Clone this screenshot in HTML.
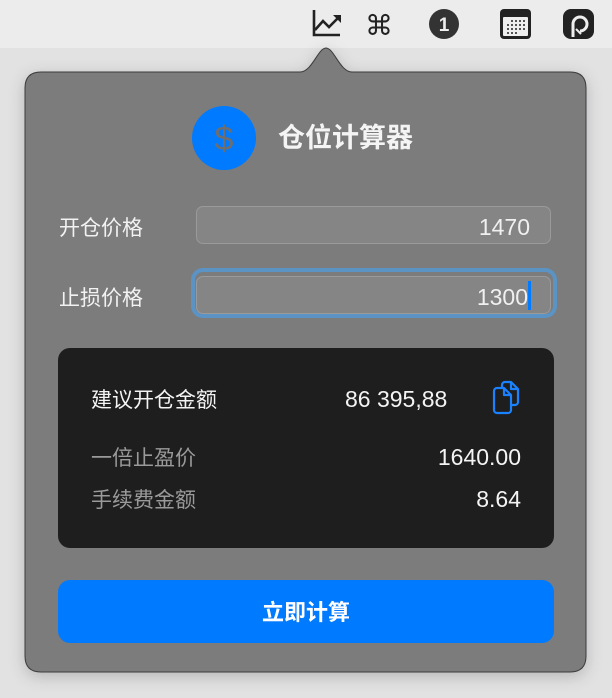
<!DOCTYPE html><html><head><meta charset="utf-8"><style>
body{margin:0;width:612px;height:698px;background:#e2e2e3;position:relative;overflow:hidden;font-family:"Liberation Sans","Noto Sans CJK SC",sans-serif}
.bar{position:absolute;left:0;top:0;width:612px;height:48px;background:#ececec}
.a{position:absolute;white-space:nowrap;line-height:1.2}
.lbl{color:#f2f2f2;font-size:21px}
.inp{position:absolute;left:196px;width:355px;height:38px;box-sizing:border-box;border:1px solid #9a9a9a;border-radius:7px;background:#858585;color:#f0f0f0;font-size:23px;text-align:right;padding-right:20px;line-height:41px}
</style></head><body>
<div class="bar"></div>
<svg class="a" style="left:0;top:0" width="612" height="698">
<defs><filter id="s" x="-10%" y="-10%" width="120%" height="120%"><feDropShadow dx="0" dy="4" stdDeviation="8" flood-color="#000" flood-opacity=".2"/></filter></defs>
<path d="M41 72 H300 C312 72 318 48 326 48 C334 48 340 72 352 72 H570 Q586 72 586 88 V656 Q586 672 570 672 H41 Q25 672 25 656 V88 Q25 72 41 72Z" fill="#7b7b7b" stroke="#3a3a3a" stroke-width="1" filter="url(#s)"/>
<path d="M314 10 V35 H340" fill="none" stroke="#222" stroke-width="2.6"/>
<path d="M315 30 L323 21 L329 27 L338 18" fill="none" stroke="#222" stroke-width="2.6"/>
<path d="M333 15 L341 15 L341 23Z" fill="#222"/>
<text x="379" y="35" font-size="28" text-anchor="middle" fill="#222" font-family="DejaVu Sans">⌘</text>
<circle cx="444" cy="24" r="15" fill="#333"/>
<text x="444" y="31" font-size="19" font-weight="bold" text-anchor="middle" fill="#eee">1</text>
<rect x="500" y="9" width="31" height="30" rx="4" fill="#222"/>
<rect x="503" y="17" width="25" height="19" rx="1" fill="#eee"/>
<g fill="#222"><circle cx="512" cy="21" r="1"/><circle cx="516" cy="21" r="1"/><circle cx="520" cy="21" r="1"/><circle cx="524" cy="21" r="1"/><circle cx="508" cy="25" r="1"/><circle cx="512" cy="25" r="1"/><circle cx="516" cy="25" r="1"/><circle cx="520" cy="25" r="1"/><circle cx="524" cy="25" r="1"/><circle cx="508" cy="29" r="1"/><circle cx="512" cy="29" r="1"/><circle cx="516" cy="29" r="1"/><circle cx="520" cy="29" r="1"/><circle cx="524" cy="29" r="1"/><circle cx="508" cy="33" r="1"/><circle cx="512" cy="33" r="1"/><circle cx="516" cy="33" r="1"/></g>
<rect x="563" y="9" width="31" height="30" rx="8" fill="#222"/>
<path d="M573 37 V24 A7 7 0 1 1 580 31" fill="none" stroke="#eee" stroke-width="3"/>
<path d="M576 29 L581 34" stroke="#eee" stroke-width="2"/>
<circle cx="224" cy="138" r="32" fill="#007aff"/>
<text x="224" y="150" font-size="34" text-anchor="middle" fill="#6e6e6e">$</text>
<rect x="193" y="270" width="362" height="46" rx="10" fill="none" stroke="#5a93c4" stroke-width="4"/>
<rect x="58" y="348" width="496" height="200" rx="12" fill="#1e1e1e"/>
<g fill="none" stroke="#1a82ff" stroke-width="2.2" stroke-linejoin="round">
<path d="M502 388 V385 a3 3 0 0 1 3 -3 h6 l7 7 v13 a3 3 0 0 1 -3 3 h-5"/>
<path d="M511 382 v7 h7"/>
<path d="M497 388 h7 l7 7 v15 a3 3 0 0 1 -3 3 h-11 a3 3 0 0 1 -3 -3 v-19 a3 3 0 0 1 3 -3z"/>
<path d="M504 388 v7 h7"/>
</g>
<rect x="58" y="580" width="496" height="63" rx="12" fill="#007aff"/>
</svg>
<div class="a" style="left:278px;top:122px;font-size:27px;font-weight:bold;color:#f4f4f4">仓位计算器</div>
<div class="a lbl" style="left:59px;top:216px">开仓价格</div>
<div class="a lbl" style="left:59px;top:286px">止损价格</div>
<div class="inp" style="top:206px">1470</div>
<div class="inp" style="top:276px;padding-right:22px">1300<span style="position:absolute;right:19px;top:4px;width:3px;height:29px;background:#007aff"></span></div>
<div class="a" style="left:91px;top:388px;font-size:21px;color:#f4f4f4">建议开仓金额</div>
<div class="a" style="left:345px;top:386px;font-size:23px;color:#f4f4f4">86 395,88</div>
<div class="a" style="left:91px;top:446px;font-size:21px;color:#9a9a9a">一倍止盈价</div>
<div class="a" style="right:91px;top:444px;font-size:23px;color:#f4f4f4">1640.00</div>
<div class="a" style="left:91px;top:488px;font-size:21px;color:#9a9a9a">手续费金额</div>
<div class="a" style="right:91px;top:486px;font-size:23px;color:#f4f4f4">8.64</div>
<div class="a" style="left:58px;width:496px;text-align:center;top:600px;font-size:22px;font-weight:bold;color:#fff">立即计算</div>
</body></html>
